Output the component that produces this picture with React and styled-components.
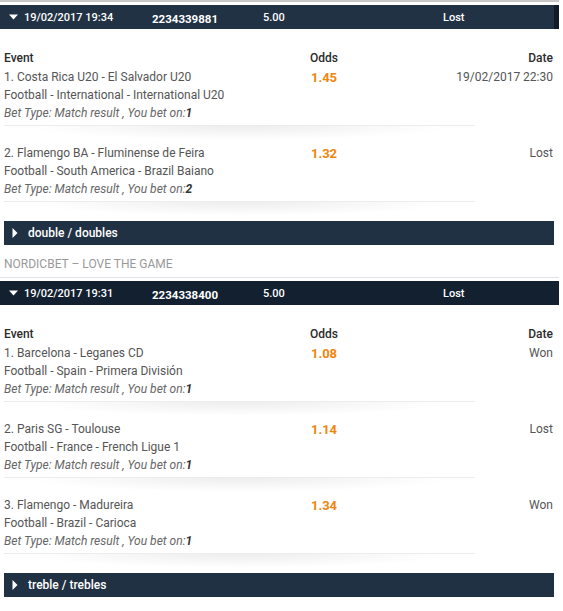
import React from "react"
import styled, { createGlobalStyle } from "styled-components"

const GlobalStyle = createGlobalStyle`
  body {
    margin: 0;
    background: #ffffff;
    font-family: Roboto, "Liberation Sans", Arial, sans-serif;
  }
`

const Page = styled.div`
  width: 559px;
  color: #555555;
  font-size: 12px;
`

const TopRule = styled.div`
  height: 2px;
  background: #c8c8c8;
`

const Header = styled.div`
  display: grid;
  grid-template-columns: 24px 128px 111px 180px 1fr;
  align-items: center;
  height: 24px;
  margin-top: 3px;
  background: ${(p) => p.$bg};
  border-right: ${(p) => (p.$edge ? "5px solid #0f1b28" : "none")};
  color: #ffffff;
  font-size: 11px;
  font-weight: 500;
`

const HeadCell = styled.span`
  padding-top: ${(p) => (p.$low ? "4px" : "0")};
  font-size: ${(p) => (p.$low ? "11.5px" : "11px")};
  font-weight: ${(p) => (p.$low ? 700 : 500)};
  white-space: nowrap;
`

const CaretBox = styled.span`
  display: flex;
  justify-content: center;
  padding-left: 2px;
`

const Body = styled.div`
  display: flow-root;
  padding-top: 20px;
`

const Row = styled.div`
  display: grid;
  grid-template-columns: 290px 60px 1fr;
  padding: 0 6px 0 4px;
  line-height: 18px;
`

const ColHead = styled.span`
  color: #2b2b2b;
  font-weight: 500;
  text-align: ${(p) => p.$align || "left"};
`

const Lines = styled.div`
  display: flex;
  flex-direction: column;
  padding-top: 1px;
`

const Line = styled.span`
  white-space: nowrap;
`

const BetType = styled.span`
  font-style: italic;
  color: #666666;
  white-space: nowrap;

  b {
    color: #333333;
    font-weight: 700;
  }
`

const Odds = styled.span`
  text-align: center;
  color: #f0850e;
  font-weight: 700;
  font-size: 13px;
  padding-top: 2px;
`

const DateCell = styled.span`
  text-align: right;
  white-space: nowrap;
  padding-top: 1px;
`

const Separator = styled.div`
  position: relative;
  width: 471px;
  height: 1px;
  margin: 3px 0 17px 4px;
  background: #ececec;

  &::after {
    content: "";
    position: absolute;
    top: 1px;
    left: 4%;
    right: 4%;
    height: 14px;
    background: radial-gradient(
      ellipse at 50% 0,
      rgba(0, 0, 0, 0.07),
      rgba(0, 0, 0, 0) 70%
    );
  }
`

const TypeBar = styled.div`
  display: flex;
  align-items: center;
  gap: 10px;
  height: 24px;
  margin: 2px 5px 0 4px;
  padding-left: 8px;
  background: #1f3143;
  color: #ffffff;
  font-weight: 500;
  font-size: 12px;
`

const Brand = styled.div`
  margin-top: 10px;
  padding-left: 4px;
  line-height: 18px;
  color: #999999;
  text-transform: uppercase;
`

const BrandRule = styled.div`
  height: 1px;
  margin-top: 4px;
  background: #e0e1e9;
`

const CaretDown = () => (
  <svg width="9" height="6" viewBox="0 0 9 6">
    <path d="M0 0.5 L9 0.5 L4.5 5.5 Z" fill="#ffffff" />
  </svg>
)

const CaretRight = () => (
  <svg width="6" height="10" viewBox="0 0 6 10">
    <path d="M0.5 0 L5.5 5 L0.5 10 Z" fill="#ffffff" />
  </svg>
)

const slips = [
  {
    date: "19/02/2017 19:34",
    id: "2234339881",
    stake: "5.00",
    status: "Lost",
    bg: "#213245",
    edge: true,
    type: "double / doubles",
    events: [
      {
        name: "1. Costa Rica U20 - El Salvador U20",
        league: "Football - International - International U20",
        pick: "1",
        odds: "1.45",
        result: "19/02/2017 22:30",
      },
      {
        name: "2. Flamengo BA - Fluminense de Feira",
        league: "Football - South America - Brazil Baiano",
        pick: "2",
        odds: "1.32",
        result: "Lost",
      },
    ],
  },
  {
    date: "19/02/2017 19:31",
    id: "2234338400",
    stake: "5.00",
    status: "Lost",
    bg: "#122030",
    edge: false,
    type: "treble / trebles",
    events: [
      {
        name: "1. Barcelona - Leganes CD",
        league: "Football - Spain - Primera División",
        pick: "1",
        odds: "1.08",
        result: "Won",
      },
      {
        name: "2. Paris SG - Toulouse",
        league: "Football - France - French Ligue 1",
        pick: "1",
        odds: "1.14",
        result: "Lost",
      },
      {
        name: "3. Flamengo - Madureira",
        league: "Football - Brazil - Carioca",
        pick: "1",
        odds: "1.34",
        result: "Won",
      },
    ],
  },
]

const Slip = ({ slip }) => (
  <>
    <Header $bg={slip.bg} $edge={slip.edge}>
      <CaretBox>
        <CaretDown />
      </CaretBox>
      <HeadCell>{slip.date}</HeadCell>
      <HeadCell $low>{slip.id}</HeadCell>
      <HeadCell>{slip.stake}</HeadCell>
      <HeadCell>{slip.status}</HeadCell>
    </Header>
    <Body>
      <Row>
        <ColHead>Event</ColHead>
        <ColHead $align="center">Odds</ColHead>
        <ColHead $align="right">Date</ColHead>
      </Row>
      {slip.events.map((ev) => (
        <div key={ev.name}>
          <Row>
            <Lines>
              <Line>{ev.name}</Line>
              <Line>{ev.league}</Line>
              <BetType>
                Bet Type: Match result , You bet on:<b>{ev.pick}</b>
              </BetType>
            </Lines>
            <Odds>{ev.odds}</Odds>
            <DateCell>{ev.result}</DateCell>
          </Row>
          <Separator />
        </div>
      ))}
    </Body>
    <TypeBar>
      <CaretRight />
      <span>{slip.type}</span>
    </TypeBar>
  </>
)

export default function App() {
  return (
    <Page>
      <GlobalStyle />
      <TopRule />
      <Slip slip={slips[0]} />
      <Brand>Nordicbet – Love the game</Brand>
      <BrandRule />
      <Slip slip={slips[1]} />
    </Page>
  )
}
